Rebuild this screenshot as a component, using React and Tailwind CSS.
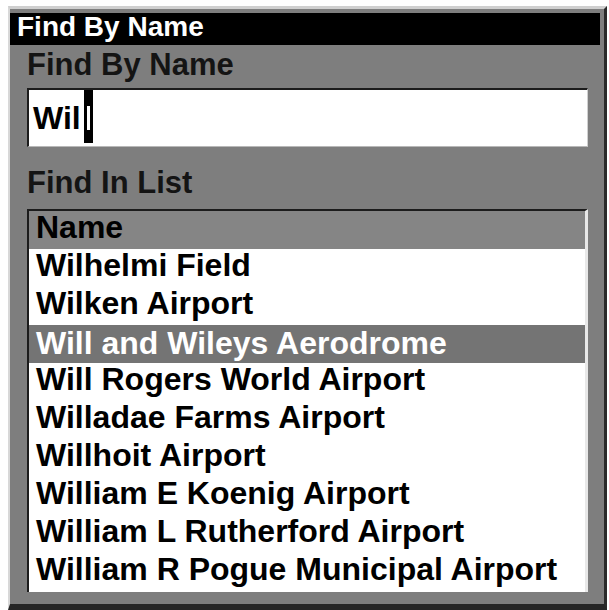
import React from "react";

const rows = [
  "Wilhelmi Field",
  "Wilken Airport",
  "Will and Wileys Aerodrome",
  "Will Rogers World Airport",
  "Willadae Farms Airport",
  "Willhoit Airport",
  "William E Koenig Airport",
  "William L Rutherford Airport",
  "William R Pogue Municipal Airport",
];

const font = { fontFamily: '"Liberation Sans", Arial, sans-serif' };

const App = () => {
  const selected = 2;

  return (
    <div className="w-[609px] h-[610px] bg-white overflow-hidden" style={font}>
      <div className="ml-[8px] mt-[6px] w-[599px] h-[604px] bg-[#7e7e7e] border-t-[3px] border-l-[2px] border-t-[#cfcfcf] border-l-[#d8d8d8] border-r-[3px] border-r-[#2a2a2a] border-b-[6px] border-b-[#262626] pt-[4px]">
        {/* title bar */}
        <div className="mr-[4px] h-[32px] bg-black pl-[7px] text-white font-bold text-[28px] leading-[28px]">
          Find By Name
        </div>

        <div className="pl-[17px]">
          <div className="h-[40px] leading-[40px] text-[31px] font-bold text-[#141414]">
            Find By Name
          </div>

          {/* text field */}
          <div className="mt-[3px] w-[561px] h-[59px] bg-white border-t-2 border-l-2 border-[#1c1c1c] border-r border-b border-r-[#d0d0d0] border-b-[#b8b8b8] flex items-start pl-[4px]">
            <span className="text-[32px] font-bold leading-[57px] text-black">
              Wil
            </span>
            <span className="ml-[3px] w-[9px] h-[53px] bg-black flex justify-center pt-[16px]">
              <span className="w-[3px] h-[24px] bg-white" />
            </span>
          </div>

          <div className="mt-[16px] h-[40px] leading-[40px] text-[31px] font-bold text-[#141414]">
            Find In List
          </div>

          {/* list */}
          <div className="mt-[6px] w-[561px] h-[383px] border-t-2 border-l-2 border-[#1c1c1c] border-r-[3px] border-r-[#e8e8e8] bg-white">
            <div className="h-[38px] bg-[#858585] pl-[7px] text-[32px] font-bold leading-[32px] text-black">
              Name
            </div>
            {rows.map((name, i) => (
              <div
                key={name}
                className={
                  i === selected
                    ? "h-[38px] bg-[#747474] pl-[7px] text-[32px] font-bold leading-[32px] text-white pt-[2px]"
                    : "h-[38px] bg-white pl-[7px] text-[32px] font-bold leading-[32px] text-black"
                }
              >
                {name}
              </div>
            ))}
          </div>
        </div>
      </div>
    </div>
  );
};

export default App;
